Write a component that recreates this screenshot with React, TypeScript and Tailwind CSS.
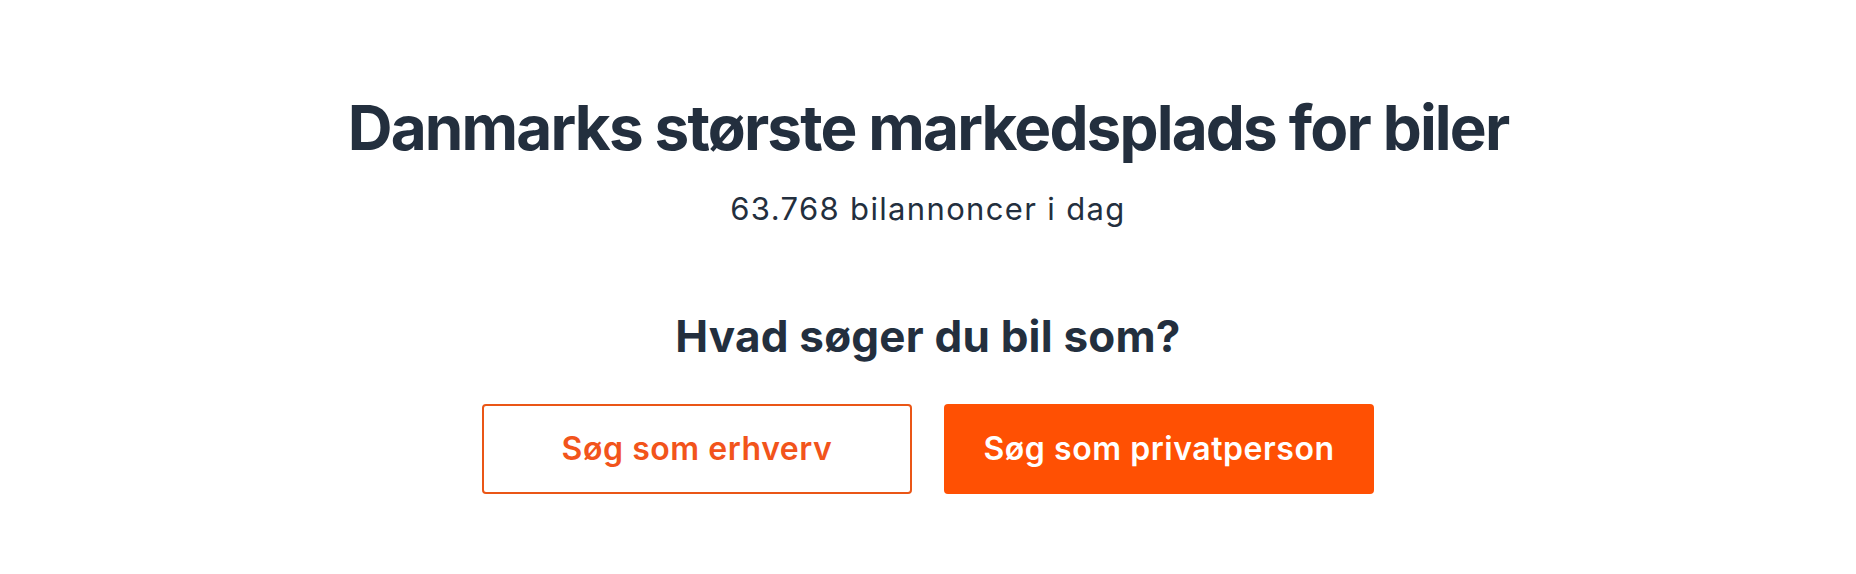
export default function App() {
  return (
    <div className="w-full h-[574px] bg-white flex flex-col items-center text-[#232f3e]" style={{ fontFamily: "Inter, 'Noto Sans', sans-serif" }}>
      <h1 className="mt-[90px] text-[62px] leading-[76px] font-bold tracking-[-1.85px]">Danmarks største markedsplads for biler</h1>
      <p className="mt-[23px] text-[31px] leading-[40px] font-normal tracking-[1.35px]">63.768 bilannoncer i dag</p>
      <h2 className="mt-[79px] text-[44px] leading-[56px] font-bold tracking-[0.2px]">Hvad søger du bil som?</h2>
      <div className="mt-[40px] flex gap-[32px]">
        <button className="w-[430px] h-[90px] rounded-[4px] border-2 border-[#ea5616] bg-white text-[#f2541b] text-[32px] font-semibold tracking-[0.55px]">Søg som erhverv</button>
        <button className="w-[430px] h-[90px] rounded-[4px] bg-[#ff5003] text-white text-[32px] font-semibold tracking-[0.55px]">Søg som privatperson</button>
      </div>
    </div>
  );
}
